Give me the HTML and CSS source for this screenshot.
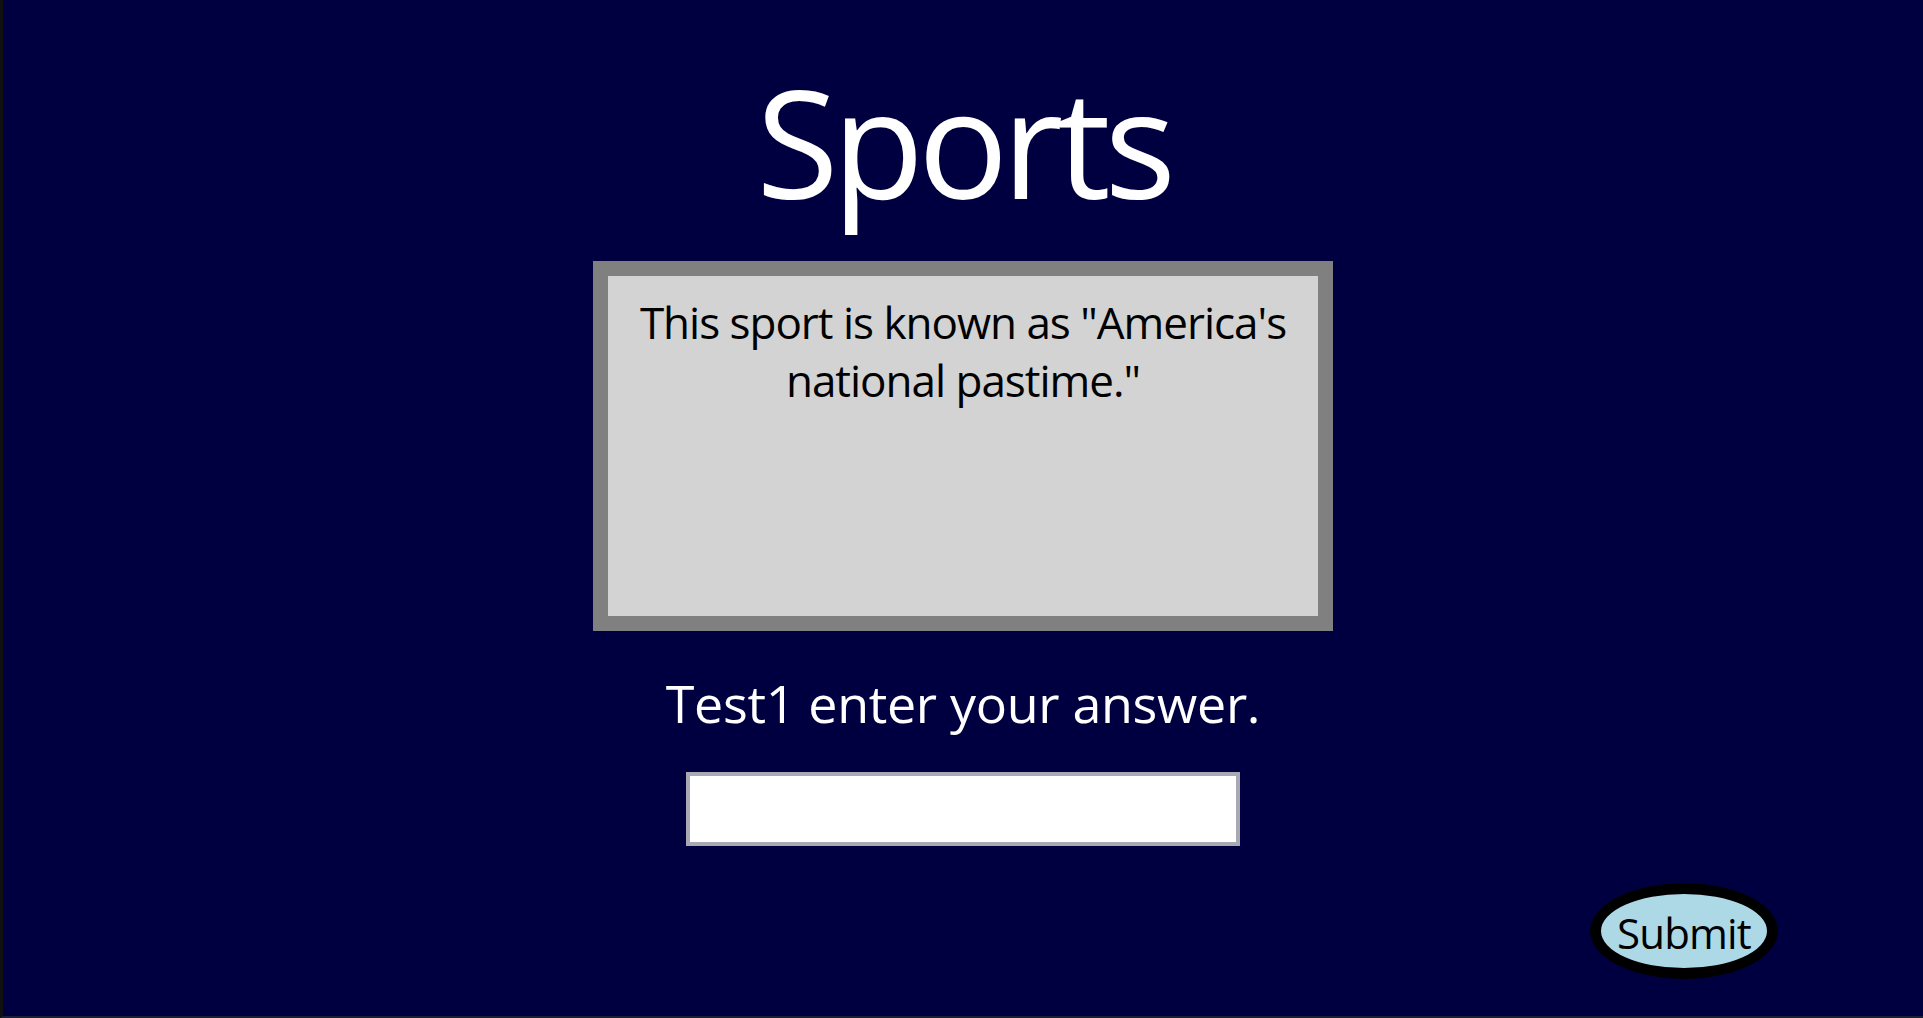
FILE: index.html
```html
<!DOCTYPE html>
<html lang="en">
<head>
<meta charset="utf-8">
<title>Sports</title>
<link rel="stylesheet" href="styles.css">
</head>
<body>
<div class="screen">
  <main class="quiz">
    <h1 class="category">Sports</h1>
    <section class="clue-card">
      <p class="clue">This sport is known as "America's national pastime."</p>
    </section>
    <p class="prompt">Test1 enter your answer.</p>
    <input class="answer" type="text" aria-label="Answer">
    <div class="actions">
      <button class="submit" type="button">Submit</button>
    </div>
  </main>
</div>
</body>
</html>
```
FILE: styles.css
```css
html, body {
  margin: 0;
  padding: 0;
  height: 100%;
}

body {
  background: #000040;
  font-family: "Open Sans", "Noto Sans", sans-serif;
  overflow: hidden;
}

.screen {
  box-sizing: border-box;
  min-height: 100vh;
  border-left: 3px solid #101010;
  border-bottom: 2px solid #1b2036;
  background: #000040;
}

.quiz {
  display: flex;
  flex-direction: column;
  align-items: center;
  padding-top: 66px;
}

.category {
  margin: 0;
  color: #ffffff;
  font-weight: 400;
  font-size: 150px;
  line-height: 150px;
  letter-spacing: -0.041em;
}

.clue-card {
  box-sizing: border-box;
  margin-top: 45px;
  width: 740px;
  height: 370px;
  border: 15px solid #808080;
  background: #d3d3d3;
  padding: 17px 8px 0;
}

.clue {
  margin: 0;
  color: #000000;
  font-size: 44px;
  line-height: 58px;
  letter-spacing: -0.023em;
  text-align: center;
}

.prompt {
  margin: 37px 0 0;
  color: #ffffff;
  font-size: 52px;
  line-height: 70px;
  letter-spacing: -0.006em;
}

.answer {
  box-sizing: border-box;
  margin-top: 34px;
  width: 554px;
  height: 74px;
  border: 4px solid #a9a9b4;
  background: #ffffff;
  outline: none;
  padding: 0 8px;
  font-size: 30px;
}

.actions {
  align-self: stretch;
  display: flex;
  justify-content: flex-end;
  padding-right: 145px;
  margin-top: 37px;
}

.submit {
  box-sizing: border-box;
  width: 188px;
  height: 96px;
  border: 11px solid #000000;
  border-radius: 50%;
  background: #add8e6;
  color: #000000;
  font-family: "Open Sans", "Noto Sans", sans-serif;
  font-size: 42px;
  line-height: 1;
  letter-spacing: -0.02em;
  padding: 4px 0 0;
  cursor: pointer;
}
```
